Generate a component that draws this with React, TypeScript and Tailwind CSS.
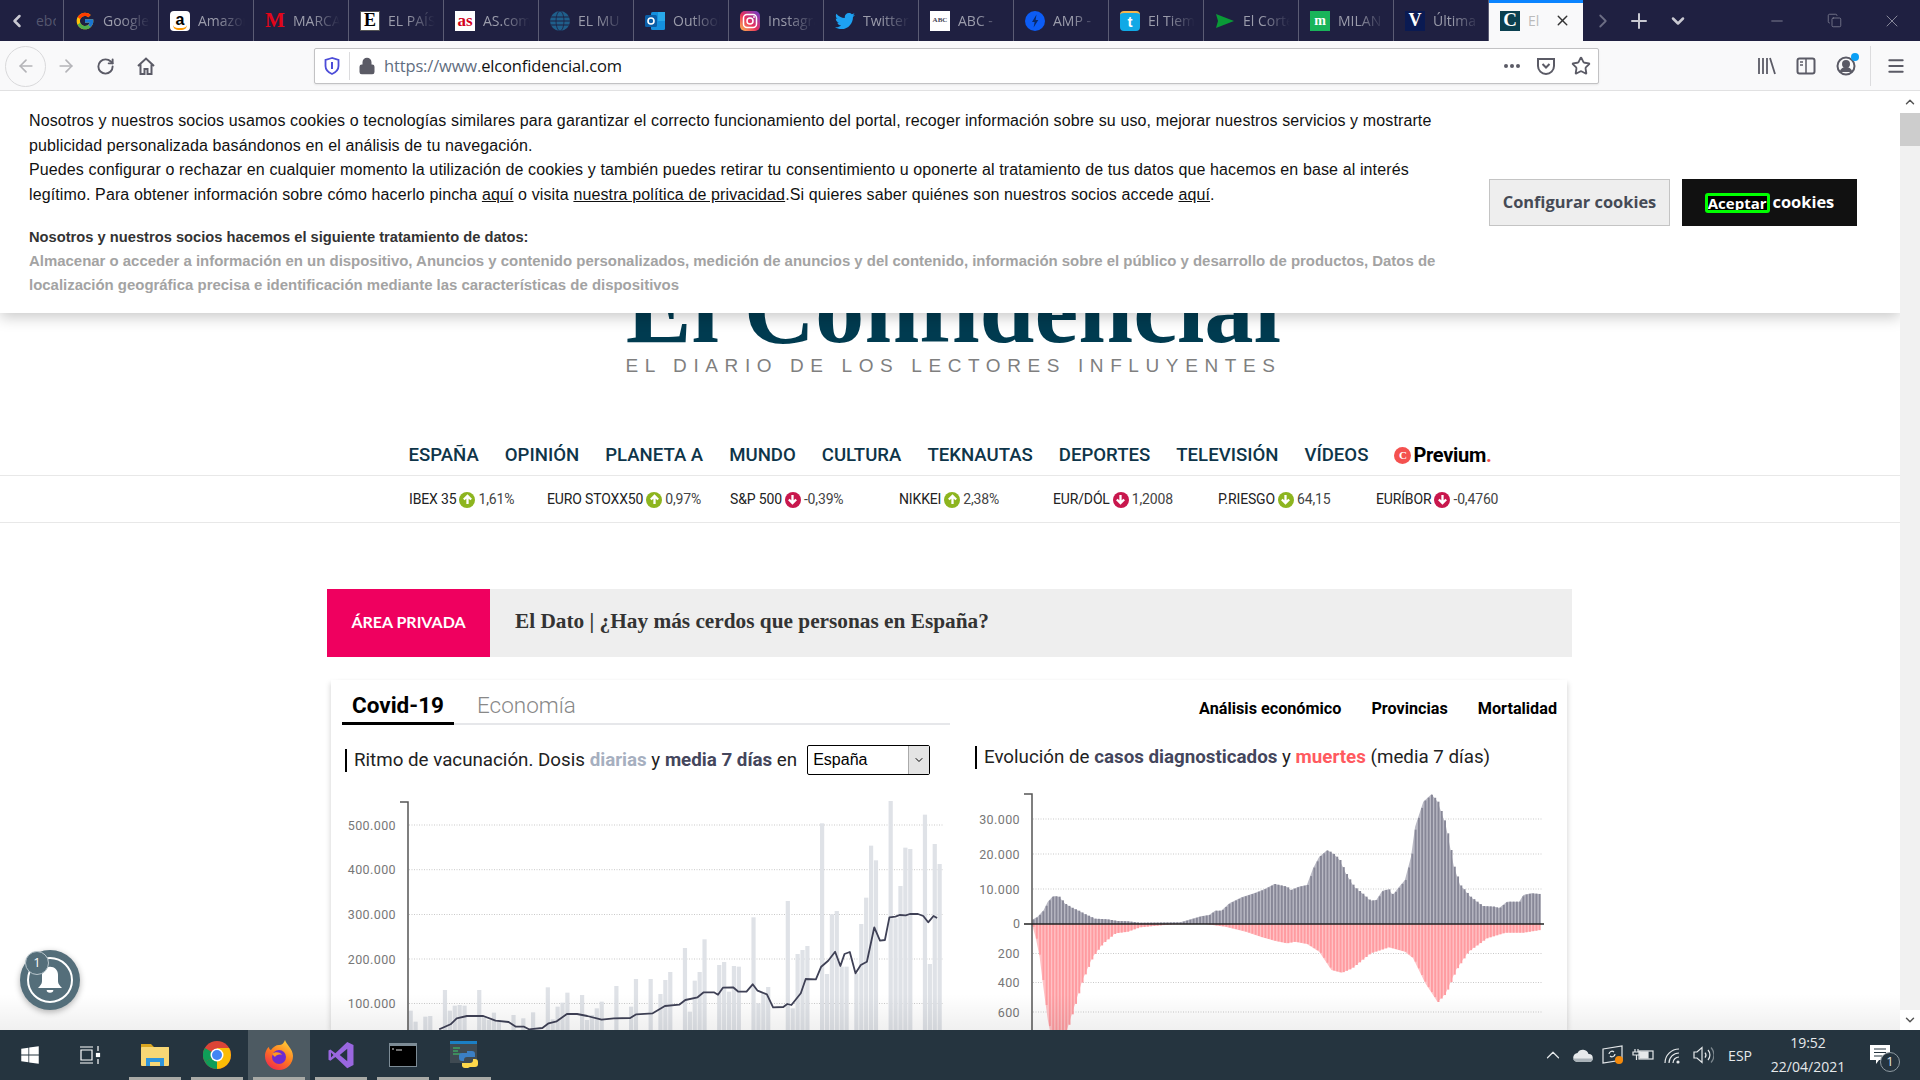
import type { ReactNode } from 'react';
import {
  ArrowLeft,
  ArrowRight,
  ChevronDown,
  ChevronLeft,
  ChevronRight,
  ChevronUp,
  Copy,
  Lock,
  Menu,
  Minus,
  Plus,
  RotateCw,
  Star,
  X,
} from 'lucide-react';
import { FcGoogle } from 'react-icons/fc';
import { FaTwitter, FaWindows } from 'react-icons/fa';

type Pt = [number, number];

const lerp = (pts: Pt[], x: number) => {
  for (let i = 1; i < pts.length; i++) {
    if (x <= pts[i][0]) {
      const [x0, y0] = pts[i - 1];
      const [x1, y1] = pts[i];
      return y0 + ((y1 - y0) * (x - x0)) / (x1 - x0);
    }
  }
  return pts[pts.length - 1][1];
};

// chart data read off the reference, in crop coordinates (x / 2.45, y / 3)
const toPageX = (base: number, x: number) => base + x / 2.45;
const toPageY = (y: number) => 680 + y / 3;

const doses: Pt[] = [
  [0, 992], [1, 1025], [3, 1010], [4, 1008], [7, 930], [8, 992], [9, 977], [10, 975], [11, 977], [14, 930], [15, 1010],
  [16, 1020], [17, 998], [18, 1020], [21, 1005], [23, 1015], [25, 997], [28, 922], [29, 1018], [30, 980], [31, 968],
  [32, 938], [35, 945], [36, 1020], [37, 1005], [38, 985], [39, 965], [42, 918], [45, 980], [46, 897], [49, 897],
  [51, 942], [52, 900], [53, 876], [56, 804], [57, 995], [58, 902], [59, 876], [60, 778], [63, 855], [64, 846],
  [65, 935], [66, 858], [67, 860], [70, 712], [71, 970], [72, 940], [73, 921], [77, 663], [78, 985], [79, 822],
  [80, 810], [81, 798], [84, 430], [85, 882], [86, 703], [87, 693], [88, 860], [89, 860], [91, 880], [92, 732],
  [93, 653], [94, 497], [95, 541], [98, 363], [99, 715], [100, 618], [101, 503], [102, 507], [105, 404], [106, 852],
  [107, 492], [108, 552],
];

const media: Pt[] = [
  [292, 1048], [320, 1033], [335, 1015], [360, 1008], [400, 1008], [430, 1022], [462, 1026], [480, 1040], [500, 1040],
  [512, 1048], [545, 1044], [560, 1030], [580, 1024], [605, 1002], [630, 1002], [655, 1008], [690, 1019], [720, 1015],
  [760, 1014], [775, 1003], [815, 1000], [845, 978], [880, 974], [895, 960], [925, 952], [940, 937], [965, 937],
  [975, 944], [987, 923], [1012, 922], [1025, 935], [1045, 935], [1060, 913], [1072, 932], [1095, 943], [1110, 982],
  [1135, 981], [1145, 972], [1155, 975], [1178, 940], [1190, 897], [1215, 898], [1228, 860], [1245, 842], [1262, 815],
  [1275, 858], [1285, 822], [1298, 816], [1312, 880], [1325, 855], [1340, 845], [1358, 742], [1372, 782], [1384, 780],
  [1395, 712], [1410, 710], [1420, 705], [1435, 706], [1445, 702], [1465, 702], [1478, 708], [1490, 727], [1503, 708],
  [1512, 714],
];

const casos: Pt[] = [
  [176, 720], [190, 710], [205, 690], [215, 665], [228, 648], [242, 650], [258, 672], [275, 684], [290, 692], [305, 702],
  [330, 716], [360, 718], [385, 723], [410, 724], [440, 728], [540, 727], [565, 718], [590, 709], [610, 705], [625, 692],
  [640, 692], [660, 670], [690, 652], [720, 640], [745, 628], [770, 612], [800, 620], [810, 630], [830, 620], [850, 615],
  [865, 565], [880, 530], [900, 510], [918, 525], [930, 540], [945, 580], [965, 620], [985, 640], [1005, 662], [1020, 660],
  [1035, 632], [1050, 628], [1060, 645], [1075, 622], [1090, 600], [1105, 530], [1115, 440], [1135, 365], [1155, 343],
  [1170, 365], [1190, 435], [1210, 560], [1225, 615], [1250, 650], [1280, 678], [1310, 680], [1320, 685], [1340, 665],
  [1370, 665], [1380, 645], [1400, 640], [1420, 642],
];

const muertes: Pt[] = [
  [176, 732], [185, 770], [195, 830], [205, 930], [215, 1020], [220, 1050], [262, 1050], [285, 960], [300, 900], [325, 830],
  [350, 790], [380, 760], [410, 755], [440, 742], [480, 737], [520, 733], [600, 732], [650, 740], [700, 755], [740, 772],
  [770, 782], [800, 790], [820, 785], [850, 792], [880, 815], [910, 870], [935, 878], [960, 865], [1005, 820], [1050, 802],
  [1090, 815], [1110, 835], [1140, 910], [1170, 966], [1190, 940], [1215, 870], [1245, 815], [1290, 775], [1335, 758],
  [1380, 758], [1420, 750],
];

function AmazonIcon() {
  return (
    <span className="relative flex h-5 w-5 justify-center rounded-sm bg-white font-['Liberation_Sans',sans-serif] text-[16px] font-bold leading-[17px] text-black">
      a
      <span className="absolute bottom-[1px] left-[3px] h-[5px] w-[14px] rounded-b-full border-b-2 border-[#f90]" />
    </span>
  );
}

function BoxLetter({ children, className }: { children: ReactNode; className: string }) {
  return <span className={`flex h-5 w-5 items-center justify-center overflow-hidden font-['Liberation_Serif',serif] font-bold ${className}`}>{children}</span>;
}

function GlobeIcon() {
  return (
    <svg viewBox="0 0 20 20" className="h-5 w-5">
      <circle cx="10" cy="10" r="10" fill="#1f5f8b" />
      <path d="M0 6h20M0 10h20M0 14h20" stroke="#1f2041" strokeWidth="1" />
      <ellipse cx="10" cy="10" rx="4" ry="10" fill="none" stroke="#1f2041" strokeWidth="0.800" />
    </svg>
  );
}

function OutlookIcon() {
  return (
    <svg viewBox="0 0 20 20" className="h-5 w-5">
      <rect x="6" y="1" width="14" height="18" rx="1.500" fill="#1490df" />
      <rect x="13" y="1" width="7" height="9" fill="#28a8ea" />
      <rect x="0" y="4" width="12" height="12" rx="1.500" fill="#0a5ea8" />
      <circle cx="6" cy="10" r="3" fill="none" stroke="#fff" strokeWidth="1.600" />
    </svg>
  );
}

function InstagramIcon() {
  return (
    <svg viewBox="0 0 20 20" className="h-5 w-5">
      <defs>
        <linearGradient id="ig" x1="0" y1="1" x2="1" y2="0">
          <stop offset="0" stopColor="#fdc04f" />
          <stop offset="0.45" stopColor="#e8305d" />
          <stop offset="1" stopColor="#6a3fd0" />
        </linearGradient>
      </defs>
      <rect width="20" height="20" rx="5" fill="url(#ig)" />
      <rect x="3.500" y="3.500" width="13" height="13" rx="3.500" fill="none" stroke="#fff" strokeWidth="1.500" />
      <circle cx="10" cy="10" r="3" fill="none" stroke="#fff" strokeWidth="1.500" />
      <circle cx="14" cy="6" r="0.900" fill="#fff" />
    </svg>
  );
}

function AmpIcon() {
  return (
    <svg viewBox="0 0 20 20" className="h-5 w-5">
      <circle cx="10" cy="10" r="10" fill="#0c5cf5" />
      <path d="M11.500 3.500 7 11h2.600l-1 5.500L13.300 9h-2.700z" fill="#0a2a6b" />
    </svg>
  );
}

function TiempoIcon() {
  return (
    <span className="flex h-5 w-5 items-center justify-center rounded-[4px] border-t-2 border-[#f5b54a] bg-[#10a9e6] font-['Liberation_Sans',sans-serif] text-[15px] font-bold leading-none text-white">
      t
    </span>
  );
}

function CorteIcon() {
  return (
    <svg viewBox="0 0 20 20" className="h-5 w-5">
      <path d="M1 3 19 10 1 17 3 10z" fill="#0a9a37" />
    </svg>
  );
}

type Tab = { label: string; icon: ReactNode };

const tabs: Tab[] = [
  { label: 'Google', icon: <FcGoogle size={20} /> },
  { label: 'Amazon', icon: <AmazonIcon /> },
  { label: 'MARCA', icon: <BoxLetter className="bg-transparent text-[21px] text-[#e2051a]">M</BoxLetter> },
  { label: 'EL PAÍS', icon: <BoxLetter className="border border-[#555] bg-white text-[18px] text-black">E</BoxLetter> },
  { label: 'AS.com', icon: <BoxLetter className="bg-white text-[17px] leading-none text-[#d3001b]">as</BoxLetter> },
  { label: 'EL MU', icon: <GlobeIcon /> },
  { label: 'Outlook', icon: <OutlookIcon /> },
  { label: 'Instagram', icon: <InstagramIcon /> },
  { label: 'Twitter', icon: <FaTwitter size={20} color="#1da1f2" /> },
  { label: 'ABC - ', icon: <BoxLetter className="bg-white text-[7px] text-[#445]">ABC</BoxLetter> },
  { label: 'AMP - ', icon: <AmpIcon /> },
  { label: 'El Tiem', icon: <TiempoIcon /> },
  { label: 'El Corte', icon: <CorteIcon /> },
  { label: 'MILAN', icon: <BoxLetter className="bg-[#19b45a] text-[14px] text-white">m</BoxLetter> },
  { label: 'Última', icon: <BoxLetter className="bg-[#0a1a52] text-[18px] text-white">V</BoxLetter> },
];

function TabStrip() {
  return (
    <div className="flex h-[41px] items-stretch bg-[#1f2041] font-['Open_Sans',sans-serif] text-[14px] text-[#9b9cab]">
      <div className="relative flex w-[64px] items-center border-r border-[#5b5c74]">
        <ChevronLeft size={20} strokeWidth={3} className="ml-[7px] text-[#c9c9d2]" />
        <span className="ml-[9px] w-[20px] overflow-hidden text-[#55566e]">ebc</span>
      </div>
      {tabs.map((tab) => (
        <div key={tab.label} className="flex w-[95px] items-center border-r border-[#5b5c74] pl-[11px]">
          <span className="flex w-[20px] shrink-0 justify-center">{tab.icon}</span>
          <span className="ml-[8px] w-[47px] overflow-hidden whitespace-nowrap [mask-image:linear-gradient(to_right,black_40%,transparent)]">
            {tab.label}
          </span>
        </div>
      ))}
      <div className="flex w-[94px] items-center border-t-[3px] border-[#0a84ff] bg-[#f9f9fa] pb-[3px] pl-[11px] text-[#777]">
        <BoxLetter className="bg-[#0b4050] text-[19px] text-white">C</BoxLetter>
        <span className="ml-[8px] w-[14px] overflow-hidden whitespace-nowrap text-[#bbb]">El C</span>
        <X size={17} className="ml-[12px] text-[#333]" />
      </div>
      <div className="flex items-center text-[#c9c9d2]">
        <ChevronRight size={22} className="ml-[9px] text-[#6c6d84]" />
        <Plus size={24} className="ml-[13px]" />
        <ChevronDown size={20} strokeWidth={3} className="ml-[17px]" />
        <Minus size={18} className="ml-[80px] text-[#9b9cab]" strokeWidth={1} />
        <Copy size={15} className="ml-[41px] text-[#9b9cab]" strokeWidth={1} />
        <X size={20} className="ml-[40px] text-[#9b9cab]" strokeWidth={1} />
      </div>
    </div>
  );
}

function Toolbar() {
  return (
    <div className="flex h-[50px] items-center border-b border-[#e1e1e2] bg-[#f9f9fa] pt-[1px] text-[#5b5b66]">
      <div className="ml-[5px] flex h-[41px] w-[41px] items-center justify-center rounded-full border border-[#d9d9db]">
        <ArrowLeft size={20} className="text-[#b4b4b8]" />
      </div>
      <ArrowRight size={20} className="ml-[10px] text-[#b4b4b8]" />
      <RotateCw size={19} strokeWidth={2.400} className="ml-[20px]" />
      <svg viewBox="0 0 20 20" className="ml-[21px] h-[20px] w-[20px]" fill="none" stroke="currentColor" strokeWidth="2">
        <path d="M2 10 10 2.500 18 10M4.500 8.500V18h4v-5h3v5h4V8.500" />
      </svg>
      <div className="ml-[158px] flex h-[36px] w-[1285px] items-center rounded-[2px] border border-[#c2c2c4] bg-white shadow-[0_1px_2px_rgba(0,0,0,0.08)]">
        <svg viewBox="0 0 16 18" className="ml-[9px] h-[18px] w-[16px]">
          <path d="M8 1 1.500 3v6c0 4 3 6.500 6.500 8 3.500-1.500 6.500-4 6.500-8V3z" fill="none" stroke="#4d4dd8" strokeWidth="1.800" />
          <rect x="7" y="5" width="2" height="7" fill="#4d4dd8" />
        </svg>
        <span className="ml-[9px] h-[28px] w-px bg-[#dcdcde]" />
        <Lock size={18} fill="currentColor" className="ml-[8px] text-[#5b5b66]" />
        <span className="ml-[8px] font-['Open_Sans',sans-serif] text-[16.500px] tracking-[-0.15px] text-[#111]">
          <span className="text-[#5f6d80]">https://www.</span>elconfidencial.com
        </span>
        <span className="ml-auto flex items-center">
          <span className="flex gap-[2px]">
            <span className="h-[4px] w-[4px] rounded-full bg-[#5b5b66]" />
            <span className="h-[4px] w-[4px] rounded-full bg-[#5b5b66]" />
            <span className="h-[4px] w-[4px] rounded-full bg-[#5b5b66]" />
          </span>
          <svg viewBox="0 0 20 20" className="ml-[16px] h-[20px] w-[20px]" fill="none" stroke="currentColor" strokeWidth="2">
            <path d="M2 3h16v7a8 8 0 0 1-16 0zM6.500 8 10 11.500 13.500 8" />
          </svg>
          <Star size={20} strokeWidth={2.200} className="ml-[15px] mr-[7px]" />
        </span>
      </div>
      <svg viewBox="0 0 20 20" className="ml-[157px] h-[20px] w-[20px]" stroke="currentColor" strokeWidth="1.800">
        <path d="M3 2v16M7 2v16M11 2v16M14 2l5 16" />
      </svg>
      <svg viewBox="0 0 20 20" className="ml-[20px] h-[20px] w-[20px]" fill="none" stroke="currentColor" strokeWidth="2">
        <rect x="1.500" y="2.500" width="17" height="15" rx="2" />
        <path d="M10 2.500v15M4 6h3M4 9h3" strokeWidth="1.500" />
      </svg>
      <div className="relative ml-[20px] h-[20px] w-[20px]">
        <svg viewBox="0 0 20 20" className="h-[20px] w-[20px]" fill="none" stroke="currentColor" strokeWidth="2">
          <circle cx="10" cy="10" r="8.500" />
          <circle cx="10" cy="8" r="3" fill="currentColor" />
          <path d="M4.500 16c1-3 3-4 5.500-4s4.500 1 5.500 4" fill="currentColor" />
        </svg>
        <span className="absolute right-[-3px] top-[-3px] h-[8px] w-[8px] rounded-full bg-[#0a9ff5]" />
      </div>
      <span className="ml-[14px] h-[40px] w-px bg-[#dcdcde]" />
      <Menu size={20} strokeWidth={2.400} className="ml-[15px]" />
    </div>
  );
}

function CookieBanner() {
  return (
    <div className="absolute inset-x-0 top-0 flex h-[222px] bg-white pl-[29px] pt-[18px] font-['Liberation_Sans',sans-serif] shadow-[0_4px_14px_rgba(0,0,0,0.22)]">
      <div className="w-[1425px]">
        <p className="text-[16px] leading-[24.600px] tracking-[0.12px] text-[#111]">
          Nosotros y nuestros socios usamos cookies o tecnologías similares para garantizar el correcto funcionamiento del portal, recoger información sobre su uso, mejorar nuestros servicios y mostrarte
          <br />
          publicidad personalizada basándonos en el análisis de tu navegación.
          <br />
          Puedes configurar o rechazar en cualquier momento la utilización de cookies y también puedes retirar tu consentimiento u oponerte al tratamiento de tus datos que hacemos en base al interés
          <br />
          legítimo. Para obtener información sobre cómo hacerlo pincha <span className="underline">aquí</span> o visita <span className="underline">nuestra política de privacidad</span>.Si quieres saber quiénes son nuestros socios accede <span className="underline">aquí</span>.
        </p>
        <p className="mt-[18px] text-[14.700px] font-bold leading-[24px] text-[#333]">Nosotros y nuestros socios hacemos el siguiente tratamiento de datos:</p>
        <p className="text-[14.950px] font-bold leading-[24px] text-[#a3a3a3]">
          Almacenar o acceder a información en un dispositivo, Anuncios y contenido personalizados, medición de anuncios y del contenido, información sobre el público y desarrollo de productos, Datos de
          <br />
          localización geográfica precisa e identificación mediante las características de dispositivos
        </p>
      </div>
      <div className="ml-[35px] mt-[70px] flex h-[47px] gap-[12px] font-['Open_Sans',sans-serif] text-[16.400px] font-bold">
        <button className="w-[181px] border border-[#c4c4c4] bg-[#eeeeee] text-[#454a55]">Configurar cookies</button>
        <button className="flex w-[175px] items-center justify-center bg-[#111] text-white">
          <span className="flex h-[20px] items-center rounded-[3px] bg-[#0f0] px-[3px]">
            <span className="h-[14px] overflow-hidden bg-black text-[15px] leading-[14px]">Aceptar</span>
          </span>
          <span className="ml-[3px]">cookies</span>
        </button>
      </div>
    </div>
  );
}

const navItems = ['ESPAÑA', 'OPINIÓN', 'PLANETA A', 'MUNDO', 'CULTURA', 'TEKNAUTAS', 'DEPORTES', 'TELEVISIÓN', 'VÍDEOS'];

function Nav() {
  return (
    <div className="flex h-[95px] items-end justify-center gap-[26px] border-b border-[#e8e8e8] pb-[7px] font-[Roboto] text-[18.600px] font-medium leading-[26px] text-[#0e3549]">
      {navItems.map((item) => (
        <span key={item}>{item}</span>
      ))}
      <span className="flex items-center text-[20px] font-bold tracking-[-0.3px] text-black">
        <span className="mr-[2px] flex h-[17px] w-[17px] items-center justify-center rounded-full bg-[#f4514f] font-['Liberation_Serif',serif] text-[11px] text-white">C</span>
        Previum<span className="text-[#f4514f]">.</span>
      </span>
    </div>
  );
}

type Tick = { name: string; value: string; up: boolean; green: boolean; width: string };

const ticks: Tick[] = [
  { name: 'IBEX 35', value: '1,61%', up: true, green: true, width: 'w-[138px]' },
  { name: 'EURO STOXX50', value: '0,97%', up: true, green: true, width: 'w-[183px]' },
  { name: 'S&P 500', value: '-0,39%', up: false, green: false, width: 'w-[169px]' },
  { name: 'NIKKEI', value: '2,38%', up: true, green: true, width: 'w-[154px]' },
  { name: 'EUR/DÓL', value: '1,2008', up: false, green: false, width: 'w-[165px]' },
  { name: 'P.RIESGO', value: '64,15', up: false, green: true, width: 'w-[158px]' },
  { name: 'EURÍBOR', value: '-0,4760', up: false, green: false, width: 'w-[123px]' },
];

function Ticker() {
  return (
    <div className="flex h-[47px] items-center border-b border-[#e8e8e8] pl-[409px] pt-[1px] font-[Roboto] text-[14px] tracking-[-0.15px] text-[#222]">
      {ticks.map((t) => (
        <div key={t.name} className={`flex items-center ${t.width}`}>
          {t.name}
          <span className={`mx-[3px] flex h-[16px] w-[16px] items-center justify-center rounded-full text-white ${t.green ? 'bg-[#8db51f]' : 'bg-[#c8174d]'}`}>
            <svg viewBox="0 0 12 12" className="h-[11px] w-[11px]" fill="none" stroke="currentColor" strokeWidth="2.500">
              {t.up ? <path d="M6 11V2M2 6l4-4 4 4" /> : <path d="M6 1v9M2 6l4 4 4-4" />}
            </svg>
          </span>
          <span className="text-[#444]">{t.value}</span>
        </div>
      ))}
    </div>
  );
}

function VaccineChart() {
  const labels: [string, number][] = [
    ['500.000', 825],
    ['400.000', 869.700],
    ['300.000', 914.500],
    ['200.000', 959],
    ['100.000', 1003.500],
  ];
  const line = media.map(([x, y]) => `${toPageX(320, x).toFixed(1)},${toPageY(y).toFixed(1)}`).join(' ');
  return (
    <svg viewBox="345 795 605 240" className="ml-[3px] mt-[20px] block h-[240px] w-[605px]">
      {labels.map(([label, y]) => (
        <g key={label}>
          <line x1="409" x2="944" y1={y} y2={y} stroke="#c9c9c9" strokeDasharray="1 1.500" />
          <text x="396" y={y + 4.500} textAnchor="end" className="fill-[#777] font-[Roboto] text-[12.500px] tracking-[0.4px]">
            {label}
          </text>
        </g>
      ))}
      {doses.map(([i, top]) => (
        <rect key={i} x={toPageX(320, 216 + 12 * i + 1)} y={toPageY(top)} width="4.200" height="300" fill="#dfe2e7" />
      ))}
      <polyline points={line} fill="none" stroke="#3f4156" strokeWidth="1.800" strokeLinejoin="round" />
      <path d="M400 802H408V1040" fill="none" stroke="#555" strokeWidth="1.500" />
    </svg>
  );
}

function CasesChart() {
  const labels: [string, number][] = [
    ['30.000', 819],
    ['20.000', 854],
    ['10.000', 889],
    ['200', 953.500],
    ['400', 982.500],
    ['600', 1012],
  ];
  const xs: number[] = [];
  for (let z = 178; z <= 1420; z += 8) xs.push(z);
  const area = (pts: Pt[]) =>
    `M${toPageX(960, pts[0][0])} 924 ` + pts.map(([x, y]) => `L${toPageX(960, x).toFixed(1)} ${toPageY(y).toFixed(1)}`).join(' ') + ` L${toPageX(960, pts[pts.length - 1][0])} 924Z`;
  return (
    <svg viewBox="975 790 585 245" className="mt-[21px] block h-[245px] w-[585px]">
      {labels.map(([label, y]) => (
        <g key={label}>
          <line x1="1033" x2="1543" y1={y} y2={y} stroke="#c9c9c9" strokeDasharray="1 1.500" />
          <text x="1020" y={y + 4.500} textAnchor="end" className="fill-[#777] font-[Roboto] text-[12.500px] tracking-[0.4px]">
            {label}
          </text>
        </g>
      ))}
      <text x="1020" y="928" textAnchor="end" className="fill-[#777] font-[Roboto] text-[12.500px]">
        0
      </text>
      <path d={area(casos)} fill="#b9b9c4" />
      <path d={area(muertes)} fill="#ffc2c5" />
      {xs.map((z) => {
        const px = toPageX(960, z);
        const up = toPageY(lerp(casos, z));
        const down = toPageY(lerp(muertes, z));
        return (
          <g key={z}>
            <rect x={px} y={up} width="1.900" height={Math.max(924 - up, 0)} fill="#878797" />
            <rect x={px} y="924" width="1.900" height={Math.max(down - 924, 0)} fill="#ff9ba0" />
          </g>
        );
      })}
      <path d="M1024 794H1032V1040" fill="none" stroke="#555" strokeWidth="1.500" />
      <path d="M1024 924H1544" stroke="#222" strokeWidth="1.500" />
    </svg>
  );
}

function ChartCard() {
  return (
    <div className="ml-[331px] mt-[23px] flex w-[1236px] font-[Roboto] shadow-[-4px_0_5px_-3px_rgba(0,0,0,0.15),4px_0_5px_-3px_rgba(0,0,0,0.15)]">
      <div className="w-[629px] pl-[11px]">
        <div className="flex h-[45px] w-[608px] items-stretch border-b-2 border-[#e6e7ea] text-[22.500px]">
          <span className="-mb-[2px] flex h-[45px] w-[112px] items-center justify-center border-b-[3px] border-black pt-[9px] font-bold text-black">Covid-19</span>
          <span className="ml-[23px] flex items-center pt-[8px] font-light text-[#888]">Economía</span>
        </div>
        <div className="ml-[3px] mt-[20px] flex h-[30px] items-center text-[18.750px] text-[#222]">
          <span className="border-l-2 border-black pl-[7px] leading-[23px]">
            Ritmo de vacunación. Dosis <b className="font-bold text-[#a6afbf]">diarias</b> y <b className="font-bold text-[#44465c]">media 7 días</b> en
          </span>
          <div className="ml-[10px] flex h-[30px] w-[123px] items-center rounded-[2px] border border-black font-['Liberation_Sans',sans-serif] text-[16px] text-black">
            <span className="ml-[5px] flex-1">España</span>
            <span className="flex h-full w-[21px] items-center justify-center border-l border-[#aaa] bg-[#e4e4e4]">
              <ChevronDown size={12} />
            </span>
          </div>
        </div>
        <VaccineChart />
      </div>
      <div className="w-[607px] pl-[15px]">
        <div className="flex h-[56px] items-center justify-end gap-[30px] pr-[10px] pt-[2px] text-[16.200px] font-bold text-black">
          <span>Análisis económico</span>
          <span>Provincias</span>
          <span>Mortalidad</span>
        </div>
        <div className="mt-[10px] border-l-2 border-black pl-[7px] text-[18.750px] leading-[23px] text-[#222]">
          Evolución de <b className="font-bold text-[#44465c]">casos diagnosticados</b> y <b className="font-bold text-[#ff5a5f]">muertes</b> (media 7 días)
        </div>
        <CasesChart />
      </div>
    </div>
  );
}

function Page() {
  return (
    <div className="relative min-w-0 flex-1 overflow-hidden bg-white">
      <div className="flex h-[290px] flex-col items-center justify-end pb-[4px] pl-[7px]">
        <div className="font-['Liberation_Serif',serif] text-[98.700px] font-bold leading-[90px] text-[#003b50]">El Confidencial</div>
        <div className="mt-[1px] whitespace-nowrap font-['Liberation_Sans',sans-serif] text-[19px] leading-[22px] tracking-[6.600px] text-[#7f7f7f]">EL DIARIO DE LOS LECTORES INFLUYENTES</div>
      </div>
      <Nav />
      <Ticker />
      <div className="ml-[327px] mt-[66px] flex h-[68px] w-[1245px] items-center bg-[#eeeeee]">
        <div className="flex h-full w-[163px] items-center justify-center bg-[#ef005f] pb-[2px] font-[Lato] text-[16px] font-bold text-white">ÁREA PRIVADA</div>
        <div className="ml-[25px] pb-[2px] font-['Liberation_Serif',serif] text-[21.300px] font-bold text-[#333]">El Dato | ¿Hay más cerdos que personas en España?</div>
      </div>
      <ChartCard />
      <div className="absolute inset-x-0 bottom-0 h-[36px] bg-gradient-to-b from-transparent to-black/6" />
      <CookieBanner />
      <div className="absolute left-[20px] top-[859px] flex h-[60px] w-[60px] items-center justify-center rounded-full bg-[#546e7a] shadow-[0_2px_6px_rgba(0,0,0,0.3)]">
        <div className="flex h-[46px] w-[46px] items-center justify-center rounded-full border-2 border-white">
          <svg viewBox="0 0 24 24" className="h-[32px] w-[32px]" fill="#fff">
            <path d="M12 2c3.500 0 6 2.500 6 6v5c0 2 1.500 3.500 3 5H3c1.500-1.500 3-3 3-5V8c0-3.500 2.500-6 6-6z" />
            <path d="M9.500 19.500h5a2.500 2 0 0 1-5 0z" />
          </svg>
        </div>
        <span className="absolute left-[5px] top-[1px] flex h-[24px] w-[24px] items-center justify-center rounded-full border border-[#b9c6cc] bg-[#546e7a] font-['Open_Sans',sans-serif] text-[13px] text-white">1</span>
      </div>
    </div>
  );
}

function Scrollbar() {
  return (
    <div className="flex w-[20px] flex-col bg-[#f1f1f1] text-[#555]">
      <div className="flex h-[22px] items-center justify-center bg-white">
        <ChevronUp size={14} strokeWidth={2.500} />
      </div>
      <div className="h-[33px] bg-[#cdcdcd]" />
      <div className="flex-1" />
      <div className="flex h-[20px] items-center justify-center bg-white">
        <ChevronDown size={14} strokeWidth={2.500} />
      </div>
    </div>
  );
}

function TaskItem({ children, active, running = true, width = 'w-[62px]' }: { children: ReactNode; active?: boolean; running?: boolean; width?: string }) {
  return (
    <div className={`relative flex h-full items-center justify-center ${width} ${active ? 'bg-[#4d5a62]' : ''}`}>
      {children}
      {running && <span className="absolute inset-x-[5px] bottom-0 h-[3px] bg-[#a9aaa6]" />}
    </div>
  );
}

function Taskbar() {
  return (
    <div className="flex h-[50px] items-center bg-[#25343f] text-white">
      <TaskItem running={false} width="w-[60px]">
        <FaWindows size={20} />
      </TaskItem>
      <TaskItem running={false} width="w-[60px]">
        <svg viewBox="0 0 22 20" className="h-[20px] w-[22px]" fill="none" stroke="currentColor" strokeWidth="1.200">
          <path d="M1 2h13M1 18h13M2 5h11v10H2zM19 1v5M19 14v5" />
          <rect x="17.500" y="8.500" width="3" height="3" fill="currentColor" />
        </svg>
      </TaskItem>
      <span className="w-[4px]" />
      <TaskItem>
        <svg viewBox="0 0 28 24" className="h-[24px] w-[28px]">
          <path d="M0 1h10l3 3h15v4H0z" fill="#d9a520" />
          <rect y="4" width="28" height="19" rx="1" fill="#f8d775" />
          <path d="M5 23v-8h18v8h-4v-4H9v4z" fill="#2f95dc" />
        </svg>
      </TaskItem>
      <TaskItem>
        <svg viewBox="0 0 28 28" className="h-[28px] w-[28px]">
          <circle cx="14" cy="14" r="14" fill="#db4437" />
          <path d="M14 14 1.900 21A14 14 0 0 0 14 28h1z" fill="#0f9d58" />
          <path d="M14 7h12.100A14 14 0 0 1 14 28z" fill="#fbbc05" />
          <path d="M14 14 1.900 21A14 14 0 0 1 1.900 7z" fill="#0f9d58" />
          <circle cx="14" cy="14" r="6.500" fill="#fff" />
          <circle cx="14" cy="14" r="5" fill="#4285f4" />
        </svg>
      </TaskItem>
      <TaskItem active>
        <svg viewBox="0 0 28 30" className="h-[30px] w-[28px]">
          <defs>
            <linearGradient id="ff" x1="0.800" y1="0" x2="0.200" y2="1">
              <stop offset="0" stopColor="#ffd43a" />
              <stop offset="0.500" stopColor="#ff7a1f" />
              <stop offset="1" stopColor="#f0264f" />
            </linearGradient>
          </defs>
          <path d="M20 0c1 4 8 9 8 16a14 14 0 0 1-28 0C0 12 2 8 4 7c0 2 1 3 2 3 2-3 5-5 8-5 3 0 5-2 6-5z" fill="url(#ff)" />
          <circle cx="14" cy="17" r="7" fill="#6e2bd0" />
          <path d="M7 14c3-3 9-2 10 1-3-1-6 0-7 2z" fill="#ff9a1f" />
        </svg>
      </TaskItem>
      <TaskItem>
        <svg viewBox="0 0 24 24" className="h-[30px] w-[30px]">
          <path fillRule="evenodd" d="M17 1.500 22 4v16l-5 2.500L7.500 13.500l-4 3L2 15.700V8.300l1.500-.8 4 3zM17 7l-6 5 6 5zM4 10v4l2-2z" fill="#9a67e0" />
        </svg>
      </TaskItem>
      <TaskItem>
        <svg viewBox="0 0 28 24" className="h-[24px] w-[28px]">
          <rect width="28" height="24" fill="#7d8c96" />
          <rect x="1" y="3" width="26" height="20" fill="#000" />
          <path d="M3 6h2M7 7h6" stroke="#ddd" strokeWidth="1" />
        </svg>
      </TaskItem>
      <TaskItem>
        <svg viewBox="0 0 30 28" className="h-[28px] w-[30px]">
          <rect width="27" height="22" fill="#3f4a52" />
          <rect width="27" height="3" fill="#1b7fc4" />
          <path d="M3 7h7M3 10h5M3 13h8" stroke="#3ecf6a" strokeWidth="1" />
          <path d="M17 10h5a3 3 0 0 1 3 3v3h-8a3 3 0 0 0-3 3v1h-2a3 3 0 0 1-3-3v-2a3 3 0 0 1 3-3h5z" fill="#3b7fc4" />
          <path d="M18 27h-3a3 3 0 0 1-3-2v-3h8a3 3 0 0 0 3-3v-1h2a3 3 0 0 1 3 3v2a3 3 0 0 1-3 3h-5z" fill="#ffd84a" />
        </svg>
      </TaskItem>
      <div className="ml-auto flex h-full items-center font-['Open_Sans',sans-serif] text-[#e6e9eb]">
        <ChevronUp size={22} strokeWidth={1.300} />
        <svg viewBox="0 0 22 14" className="ml-[8px] h-[14px] w-[22px]">
          <path d="M6 14a4.500 4.500 0 0 1-.5-9 6 6 0 0 1 11 1 4 4 0 0 1 .5 8z" fill="#e6e9eb" />
          <path d="M1 10.500h20a4 4 0 0 1-4 3.500H6a5 5 0 0 1-5-3.500z" fill="#a9b2b8" />
        </svg>
        <svg viewBox="0 0 22 20" className="ml-[8px] h-[20px] w-[22px]" fill="none" stroke="currentColor" strokeWidth="1.200">
          <path d="M1 4 20 1v14L1 18z" />
          <path d="M7 9a3 3 0 0 1 5-2M13 9a3 3 0 0 1-5 2" />
          <circle cx="17" cy="15" r="4" fill="#f58a0b" stroke="none" />
        </svg>
        <svg viewBox="0 0 22 14" className="ml-[8px] h-[14px] w-[22px]" fill="none" stroke="currentColor" strokeWidth="1.200">
          <path d="M3 1v3M6 1v3M1 4h7v3H1zM4.500 7v5" />
          <rect x="7" y="3" width="14" height="8" />
          <rect x="8" y="4" width="8" height="6" fill="currentColor" />
        </svg>
        <svg viewBox="0 0 22 20" className="ml-[8px] h-[20px] w-[22px]" fill="none" stroke="currentColor" strokeWidth="1.200">
          <path d="M3 18a14 14 0 0 1 14-14M7 18a10 10 0 0 1 10-10M11 18a6 6 0 0 1 6-6" />
          <circle cx="16" cy="17" r="1.600" fill="currentColor" stroke="none" />
        </svg>
        <svg viewBox="0 0 22 20" className="ml-[8px] h-[20px] w-[22px]" fill="none" stroke="currentColor" strokeWidth="1.200">
          <path d="M2 7h3l5-4.500v15L5 13H2zM13 7.500a4 4 0 0 1 0 5M16 5a7.500 7.500 0 0 1 0 10" />
          <path d="M19 2.500a11 11 0 0 1 0 15" stroke="#7c878e" />
        </svg>
        <span className="ml-[14px] text-[14px]">ESP</span>
        <div className="ml-[16px] flex w-[80px] flex-col items-center text-[14px] leading-[24px]">
          <span>19:52</span>
          <span>22/04/2021</span>
        </div>
        <div className="relative ml-[21px] mr-[29px] h-[24px] w-[22px]">
          <svg viewBox="0 0 22 24" className="h-[24px] w-[22px]">
            <path d="M1 2h20v15H10l-3 4v-4H1z" fill="#fff" />
            <path d="M5 6h12M5 9.500h12M5 13h8" stroke="#25343f" strokeWidth="1.200" />
          </svg>
          <span className="absolute bottom-[-5px] right-[-9px] flex h-[20px] w-[20px] items-center justify-center rounded-full border border-[#8f9aa1] bg-[#25343f] text-[13px]">1</span>
        </div>
      </div>
    </div>
  );
}

export default function App() {
  return (
    <div className="flex h-screen w-screen flex-col overflow-hidden">
      <TabStrip />
      <Toolbar />
      <div className="flex min-h-0 flex-1">
        <Page />
        <Scrollbar />
      </div>
      <Taskbar />
    </div>
  );
}
